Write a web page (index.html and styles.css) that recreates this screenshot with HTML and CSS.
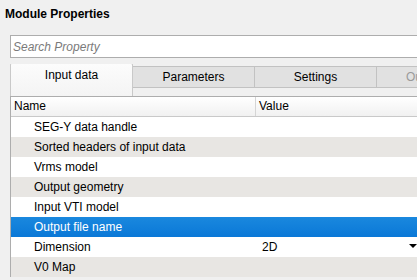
FILE: index.html
```html
<!DOCTYPE html>
<html lang="en">
<head>
    <meta charset="UTF-8">
    <title>Module Properties</title>
    <link rel="stylesheet" href="styles.css">
</head>
<body>
    <div class="panel">
        <h1 class="panel-title">Module Properties</h1>

        <div class="search">
            <input type="text" class="search-input" placeholder="Search Property">
        </div>

        <div class="tabs">
            <div class="tab tab-active">Input data</div>
            <div class="tab">Parameters</div>
            <div class="tab">Settings</div>
            <div class="tab tab-cut">Output</div>
        </div>

        <div class="grid">
            <div class="grid-head">
                <div class="cell-name">Name</div>
                <div class="cell-value">Value</div>
            </div>
            <div class="row"><div class="cell-name">SEG-Y data handle</div><div class="cell-value"></div></div>
            <div class="row row-alt"><div class="cell-name">Sorted headers of input data</div><div class="cell-value"></div></div>
            <div class="row"><div class="cell-name">Vrms model</div><div class="cell-value"></div></div>
            <div class="row row-alt"><div class="cell-name">Output geometry</div><div class="cell-value"></div></div>
            <div class="row"><div class="cell-name">Input VTI model</div><div class="cell-value"></div></div>
            <div class="row row-selected"><div class="cell-name">Output file name</div><div class="cell-value"></div></div>
            <div class="row">
                <div class="cell-name">Dimension</div>
                <div class="cell-value combo">
                    <span>2D</span>
                    <span class="combo-arrow"></span>
                </div>
            </div>
            <div class="row row-alt"><div class="cell-name">V0 Map</div><div class="cell-value"></div></div>
        </div>
    </div>
</body>
</html>
```

FILE: styles.css
```css
:root {
    --bg-color: #f0f0f0;
    --border-color: #adadad;
    --alt-row: #e8e6e3;
    --text-color: #000;
}

* {
    box-sizing: border-box;
    margin: 0;
    padding: 0;
}

body {
    background-color: var(--bg-color);
    color: var(--text-color);
    font-family: 'Liberation Sans', Arial, sans-serif;
    font-size: 12px;
    overflow: hidden;
    width: 417px;
    height: 280px;
}

.panel {
    padding: 5px 0 0 10px;
    width: 417px;
    height: 280px;
    overflow: hidden;
}

.panel-title {
    font-size: 12px;
    font-weight: bold;
    margin-left: -5px;
    height: 30px;
    line-height: 18px;
}

/* Search box */
.search {
    margin-bottom: 6px;
}

.search-input {
    width: 100%;
    height: 23px;
    border: 1px solid var(--border-color);
    border-right: none;
    background: #fff;
    padding: 0 2px;
    font-family: inherit;
    font-size: 12px;
    font-style: italic;
    outline: none;
}

.search-input::placeholder {
    color: #7a7a7a;
}

/* Tabs */
.tabs {
    display: flex;
    align-items: flex-end;
    height: 33px;
    border-bottom: 1px solid var(--border-color);
    overflow: hidden;
}

.tab {
    flex-shrink: 0;
    width: 122px;
    height: 22px;
    margin-bottom: 8px;
    line-height: 20px;
    text-align: center;
    background-color: #e1e1e1;
    border: 1px solid #c2c2c2;
    border-left: none;
}

.tab-active {
    width: 123px;
    height: 33px;
    margin-bottom: 0;
    padding-bottom: 10px;
    line-height: 22px;
    background: linear-gradient(#fcfcfc, #f4f4f4);
    border: 1px solid #c9c9c9;
    border-bottom: none;
    border-radius: 2px 2px 0 0;
}

.tab-cut {
    color: #9a9a9a;
    text-align: left;
    padding-left: 29px;
}

/* Property grid */
.grid {
    border-left: 1px solid var(--border-color);
    background: #fff;
}

.grid-head {
    display: flex;
    height: 20px;
    line-height: 19px;
    background: linear-gradient(#ffffff, #f1f1f1);
    border-bottom: 1px solid #c9c9c9;
}

.grid-head .cell-name {
    padding-left: 3px;
    border-right: 1px solid #d5d5d5;
}

.row {
    display: flex;
    height: 20px;
    line-height: 20px;
}

.row .cell-name {
    padding-left: 23px;
}

.cell-name {
    width: 245px;
    flex-shrink: 0;
}

.cell-value {
    flex: 1;
    padding-left: 3px;
}

.row-alt {
    background-color: var(--alt-row);
}

.row-selected {
    background: linear-gradient(#1a88de, #0a78d7);
    color: #fff;
}

/* Combo box cell */
.combo {
    display: flex;
    justify-content: space-between;
    align-items: center;
    padding-left: 6px;
    padding-right: 0;
}

.combo-arrow {
    width: 0;
    height: 0;
    border-left: 4px solid transparent;
    border-right: 4px solid transparent;
    border-top: 4px solid #000;
    margin-top: -3px;
}
```
